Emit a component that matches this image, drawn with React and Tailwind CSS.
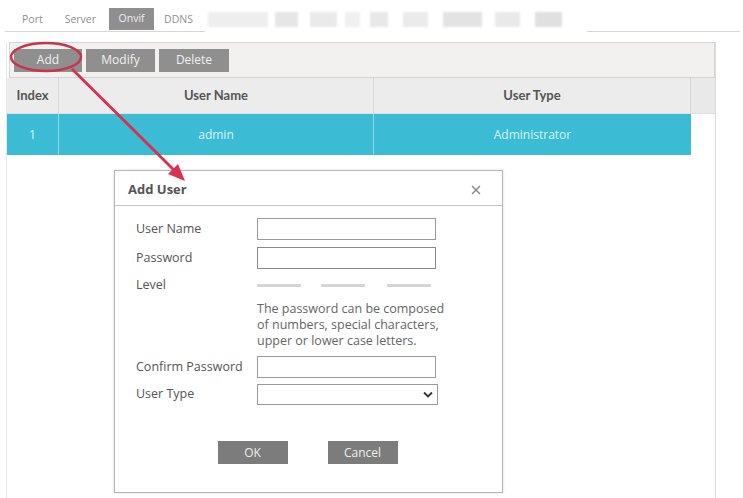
import React from "react";

export default function App() {
  const blocks = [
    [208, 60, "#eeeeee"],
    [275, 23, "#e6e6e6"],
    [310, 27, "#eaeaea"],
    [345, 15, "#f0f0f0"],
    [370, 18, "#e8e8e8"],
    [403, 25, "#ebebeb"],
    [443, 39, "#e3e3e3"],
    [495, 25, "#e9e9e9"],
    [535, 27, "#e0e0e0"],
  ];
  return (
    <div
      className="relative w-[743px] h-[498px] overflow-hidden bg-white text-[#555]"
      style={{ fontFamily: '"Open Sans", "Noto Sans", sans-serif' }}
    >
      {/* Tabs row */}
      <div className="flex items-end h-[32px] pt-[8px]">
        <div className="flex items-stretch ml-[5px] w-[200px] h-[24px] border-b border-[#d6d6d6] text-[10.5px] text-[#8f8f8f]">
          <div className="pl-[17px] pr-[22px] flex items-center">Port</div>
          <div className="pr-[13px] flex items-center">Server</div>
          <div className="w-[45px] h-[22px] bg-[#8f8f8f] text-[#eee] flex items-center justify-center">Onvif</div>
          <div className="pl-[10px] flex items-center">DDNS</div>
        </div>
        <div className="relative w-[382px] h-[24px]">
          {blocks.map(([x, w, c], i) => (
            <div
              key={i}
              className="absolute top-[4px] h-[15px] blur-[1px]"
              style={{ left: x - 205, width: w, background: c }}
            />
          ))}
        </div>
        <div className="w-[153px] h-[24px] border-b border-[#d6d6d6]" />
      </div>

      {/* Panel */}
      <div className="ml-[6px] mt-[10px] w-[710px] h-[456px] border-r border-[#dcdcdc] border-l border-l-[#e8e8e8]">
        {/* Toolbar */}
        <div className="ml-[2px] h-[36px] bg-[#f3f1ef] border border-[#d4d4d4] flex items-center gap-[4px] pl-[4px] text-[12px] text-[#f0f0f0]">
          <div className="w-[68px] h-[23px] bg-[#8f8f8f] flex items-center justify-center">Add</div>
          <div className="w-[69px] h-[23px] bg-[#8f8f8f] flex items-center justify-center">Modify</div>
          <div className="w-[70px] h-[23px] bg-[#8f8f8f] flex items-center justify-center">Delete</div>
        </div>
        {/* Table header */}
        <div
          className="flex h-[36px] bg-[#ececec] text-[13px] font-bold text-[#555] border-b border-[#e0e0e0]"
          style={{ fontFamily: 'Lato, "Open Sans", sans-serif' }}
        >
          <div className="w-[52px] flex items-center justify-center border-r border-[#d6d6d6]">Index</div>
          <div className="w-[315px] flex items-center justify-center border-r border-[#d6d6d6]">User Name</div>
          <div className="w-[317px] flex items-center justify-center border-r border-[#d6d6d6]">User Type</div>
          <div className="flex-1 bg-[#e9e9e9]" />
        </div>
        {/* Row */}
        <div className="flex h-[41px] text-[12px] text-[#dff3f7]">
          <div className="w-[52px] bg-[#3bbcd4] flex items-center justify-center border-r border-[#8fd6e4]">1</div>
          <div className="w-[315px] bg-[#3bbcd4] flex items-center justify-center border-r border-[#8fd6e4]">admin</div>
          <div className="w-[317px] bg-[#3bbcd4] flex items-center justify-center">Administrator</div>
          <div className="flex-1" />
        </div>
      </div>

      {/* Dialog */}
      <div className="absolute left-[114px] top-[170px] w-[389px] h-[323px] bg-white border border-[#b4b4b4] shadow-[0_0_3px_rgba(0,0,0,0.12)]">
        <div className="h-[35px] border-b border-[#c4c4c4] flex items-center justify-between pl-[13px] pr-[21px] pt-[3px]">
          <span className="text-[13px] font-bold text-[#555]">Add User</span>
          <svg width="10" height="10" viewBox="0 0 10 10">
            <path d="M1 1 L9 9 M9 1 L1 9" stroke="#8a8a8a" strokeWidth="1.5" />
          </svg>
        </div>
        <div className="pl-[21px] text-[12.5px] text-[#555]">
          <div className="flex items-center mt-[12px] h-[22px]">
            <div className="w-[121px]">User Name</div>
            <div className="w-[179px] h-[22px] border border-[#9a9a9a]" />
          </div>
          <div className="flex items-center mt-[7px] h-[22px]">
            <div className="w-[121px]">Password</div>
            <div className="w-[179px] h-[22px] border border-[#8a8a8a]" />
          </div>
          <div className="flex items-center mt-[7px] h-[18px]">
            <div className="w-[121px]">Level</div>
            <div className="flex items-center">
              <div className="w-[44px] h-[3px] bg-[#d6d6d6]" />
              <div className="w-[44px] h-[3px] bg-[#d6d6d6] ml-[20px]" />
              <div className="w-[44px] h-[3px] bg-[#d6d6d6] ml-[22px]" />
            </div>
          </div>
          <div className="ml-[121px] mt-[7px] leading-[16px] text-[#666]">
            The password can be composed
            <br />
            of numbers, special characters,
            <br />
            upper or lower case letters.
          </div>
          <div className="flex items-center mt-[7px] h-[22px]">
            <div className="w-[121px]">Confirm Password</div>
            <div className="w-[179px] h-[22px] border border-[#9a9a9a]" />
          </div>
          <div className="flex items-center mt-[6px] h-[21px]">
            <div className="w-[121px]">User Type</div>
            <div className="w-[181px] h-[21px] border border-[#9a9a9a] flex items-center justify-end pr-[4px]">
              <svg width="10" height="7" viewBox="0 0 10 7">
                <path d="M1 1.5 L5 5.5 L9 1.5" fill="none" stroke="#333" strokeWidth="1.8" />
              </svg>
            </div>
          </div>
        </div>
        <div className="flex justify-center gap-[40px] mt-[36px] pr-[2px] text-[12px] text-[#eee]">
          <div className="w-[70px] h-[23px] bg-[#7c7c7c] flex items-center justify-center">OK</div>
          <div className="w-[70px] h-[23px] bg-[#7c7c7c] flex items-center justify-center">Cancel</div>
        </div>
      </div>

      {/* Annotation overlay */}
      <svg className="absolute left-0 top-0 pointer-events-none" width="743" height="498">
        <ellipse cx="46" cy="57" rx="35" ry="14" fill="none" stroke="#c8344c" strokeWidth="2.5" />
        <line x1="72" y1="69" x2="177" y2="173" stroke="#d9304f" strokeWidth="2.8" />
        <path d="M185 181 L168 174 L178 164 Z" fill="#d9304f" />
      </svg>
    </div>
  );
}
